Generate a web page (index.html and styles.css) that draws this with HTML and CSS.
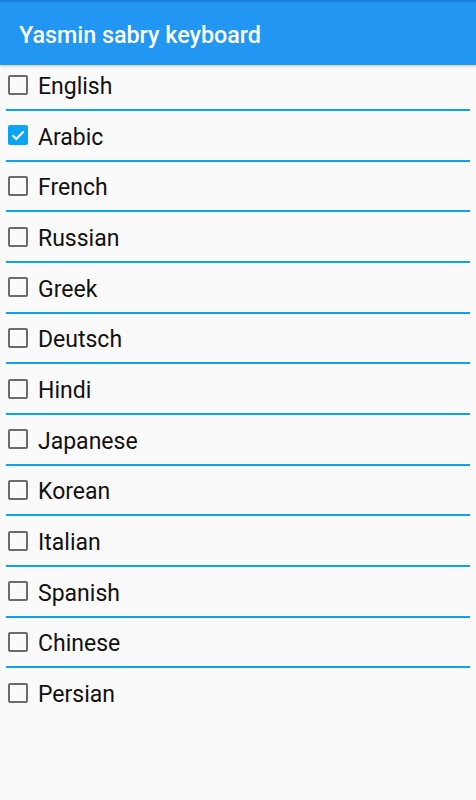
FILE: index.html
```html
<!DOCTYPE html>
<html>
<head>
<meta charset="utf-8">
<link rel="stylesheet" href="styles.css">
</head>
<body>
<header class="appbar"><h1 class="title">Yasmin sabry keyboard</h1></header>
<ul class="list">
  <li class="row"><span class="box"></span><span class="label">English</span></li>
  <li class="row"><span class="box checked"><svg viewBox="0 0 20 20" width="20" height="20"><path d="M4.5 10.2 L8.3 14 L15.6 6.5" fill="none" stroke="#fff" stroke-width="2.2"/></svg></span><span class="label">Arabic</span></li>
  <li class="row"><span class="box"></span><span class="label">French</span></li>
  <li class="row"><span class="box"></span><span class="label">Russian</span></li>
  <li class="row"><span class="box"></span><span class="label">Greek</span></li>
  <li class="row"><span class="box"></span><span class="label">Deutsch</span></li>
  <li class="row"><span class="box"></span><span class="label">Hindi</span></li>
  <li class="row"><span class="box"></span><span class="label">Japanese</span></li>
  <li class="row"><span class="box"></span><span class="label">Korean</span></li>
  <li class="row"><span class="box"></span><span class="label">Italian</span></li>
  <li class="row"><span class="box"></span><span class="label">Spanish</span></li>
  <li class="row"><span class="box"></span><span class="label">Chinese</span></li>
  <li class="row last"><span class="box"></span><span class="label">Persian</span></li>
</ul>
</body>
</html>
```
FILE: styles.css
```css
html, body {
  margin: 0;
  padding: 0;
  background: #fafafa;
  font-family: Roboto, "Liberation Sans", sans-serif;
  height: 100%;
}
.appbar {
  position: relative;
  z-index: 2;
  height: 63px;
  background: #2196f3;
  border-top: 2px solid #1e7fd8;
  box-shadow: 0 1px 3px rgba(0,0,0,0.22);
  display: flex;
  align-items: center;
  padding-left: 19px;
}
.title {
  margin: 0;
  color: #fff;
  font-size: 23.3px;
  font-weight: 500;
  padding-top: 3px;
}
.list {
  list-style: none;
  margin: -4.67px 0 0 0;
  padding: 0;
}
.row {
  height: 48.67px;
  margin: 0 6px;
  border-bottom: 2px solid #0ba4f0;
  display: flex;
  align-items: center;
  padding-left: 2px;
}
.row.last {
  border-bottom: none;
}
.box {
  width: 20px;
  height: 20px;
  box-sizing: border-box;
  border: 2px solid #6b6b6b;
  border-radius: 2px;
  flex: none;
  display: flex;
  align-items: center;
  justify-content: center;
}
.box.checked {
  border: none;
  background: #0ba4f0;
}
.box svg { display: block; }
.label {
  margin-left: 10px;
  font-size: 23px;
  color: #111;
  padding-top: 4px;
}
```
